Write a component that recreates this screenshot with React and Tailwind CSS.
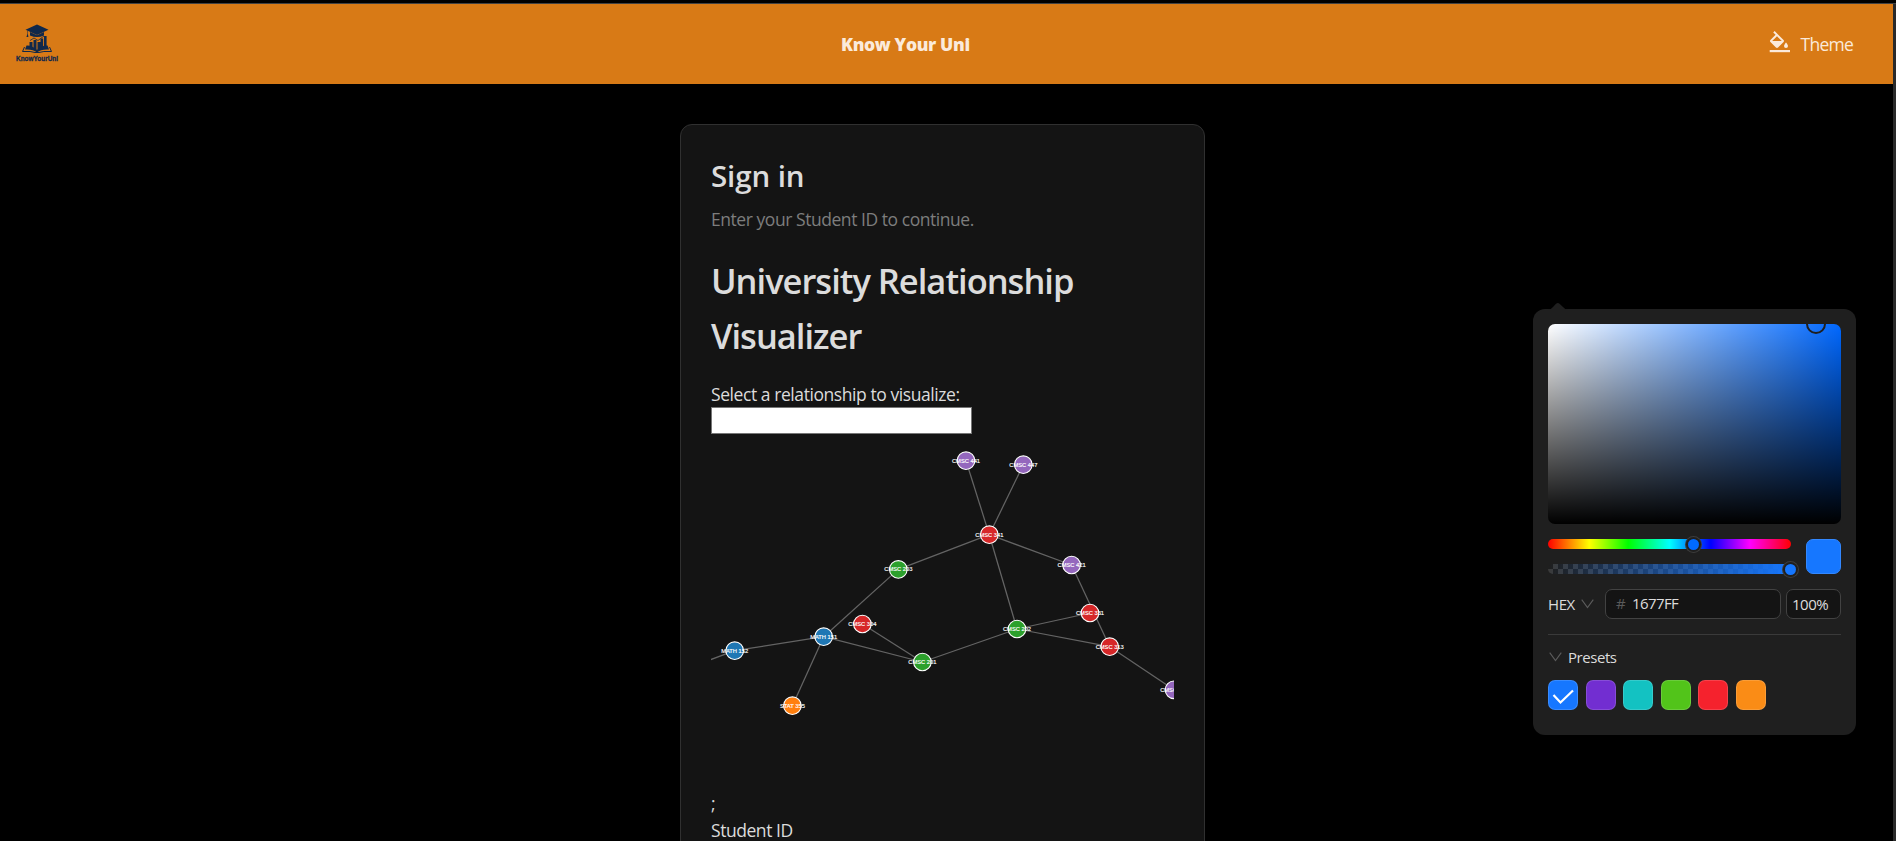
const BLUE = "#1f77b4", GREEN = "#2ca02c", RED = "#d62728", PURPLE = "#9467bd", ORANGE = "#ff7f0e";

const nodes = {
  m152: [734.7, 650.7, "MATH 152", BLUE],
  m151: [823.7, 636.7, "MATH 151", BLUE],
  s355: [792.4, 705.7, "STAT 355", ORANGE],
  c304: [862.4, 624, "CMSC 304", RED],
  c203: [898.3, 569.4, "CMSC 203", GREEN],
  c201: [922.4, 662, "CMSC 201", GREEN],
  c441: [966, 460.7, "CMSC 441", PURPLE],
  c447: [1023.3, 464.7, "CMSC 447", PURPLE],
  c341: [989.3, 534.7, "CMSC 341", RED],
  c421: [1071.6, 565, "CMSC 421", PURPLE],
  c202: [1017, 629, "CMSC 202", GREEN],
  c331: [1090, 613, "CMSC 331", RED],
  c313: [1109.7, 646.7, "CMSC 313", RED],
  c411: [1174, 689.8, "CMSC 411", PURPLE],
};

const links = [
  ["c441", "c341"], ["c447", "c341"], ["c341", "c203"], ["c341", "c421"], ["c341", "c202"],
  ["c203", "m151"], ["m151", "m152"], ["m151", "s355"], ["m151", "c201"], ["c304", "c201"],
  ["c201", "c202"], ["c202", "c331"], ["c202", "c313"], ["c421", "c313"], ["c313", "c411"],
];

function Graph() {
  return (
    <svg className="block h-[350px] w-[463px]" viewBox="711 434 463 350">
      <g stroke="#999" strokeOpacity="0.6" strokeWidth="1.25">
        {links.map(([a, b]) => (
          <line key={a + b} x1={nodes[a][0]} y1={nodes[a][1]} x2={nodes[b][0]} y2={nodes[b][1]} />
        ))}
        <line x1="734.7" y1="650.7" x2="700" y2="663.6" />
      </g>
      {Object.entries(nodes).map(([id, [x, y, label, fill]]) => (
        <g key={id}>
          <circle cx={x} cy={y} r="8.8" fill={fill} stroke="#fff" strokeWidth="1.1" />
          <text x={x} y={y + 2} textAnchor="middle" fill="#fff" stroke="#fff" strokeWidth="0.15" className="font-['Liberation_Sans'] text-[5.75px]">{label}</text>
        </g>
      ))}
    </svg>
  );
}

function Logo() {
  return (
    <svg className="h-[38px] w-[44px] overflow-visible" viewBox="0 0 44 38" fill="#10284a">
      <path d="M22-.5 10.500 4.800 22 10l11.500-5.200z" />
      <path d="M15 7v3.5q7 3 14 0V7l-7 3.2z" />
      <path d="M12.4 5.5v3.5l-1 3h2l-.5-3V5.5z" />
      <path d="M14.5 17h3v6l-3-1zM18.5 15h3v10l-3-1.5zM22.5 17h3v8h-3zM25.5 13.5h2.6v10l-2.6 1zM29 11h2.6v11l-2.6 1z" />
      <path d="m15 15.5 4-2.5 4 2.5 6-4.5" fill="none" stroke="#10284a" strokeWidth=".8" />
      <path d="M11.5 20.5Q17 20 22 25q5-5 10.500-4.500l1.500 4q-8-.5-12 3-4-3.500-12-3z" />
      <path d="m9.500 22-2 4.500q9-.5 12.500 1h4q3.500-1.500 12.500-1l-2-4.500" fill="none" stroke="#10284a" strokeWidth="1" />
      <text x="22" y="35.500" textAnchor="middle" textLength="42" lengthAdjust="spacingAndGlyphs" stroke="#10284a" strokeWidth="0.3" className="font-['Liberation_Sans'] text-[7.2px] font-bold">KnowYourUni</text>
    </svg>
  );
}

function PaintBucket() {
  return (
    <svg className="mt-[-3px] size-[24px]" viewBox="0 0 24 24" fill="currentColor">
      <path d="M16.560 8.940 7.620 0 6.210 1.410l2.380 2.380-5.150 5.150a1.490 1.490 0 0 0 0 2.120l5.500 5.500c.29.29.68.44 1.060.44s.77-.15 1.060-.44l5.500-5.500c.59-.58.59-1.530 0-2.120zM5.210 10 10 5.210 14.790 10zM19 11.500s-2 2.170-2 3.500a2 2 0 0 0 4 0c0-1.330-2-3.500-2-3.500z" />
      <path d="M2.700 19h20.300v2.200H2.700z" />
    </svg>
  );
}

function Chevron() {
  return (
    <svg className="h-[10px] w-[13px]" viewBox="0 0 13 10" fill="none" stroke="#5c5c5c" strokeWidth="1.1">
      <path d="m.7.7 5.800 7.800L12.300.7" />
    </svg>
  );
}

function Handle({ color }) {
  return (
    <span className="block size-[15px] rounded-full bg-[#1f1f1f] p-[2px] ring-1 ring-[#3d3d3d]">
      <span className={"block size-full rounded-full " + color} />
    </span>
  );
}

const presets = ["bg-[#1677ff]", "bg-[#722ed1]", "bg-[#13c2c2]", "bg-[#52c41a]", "bg-[#f5222d]", "bg-[#fa8c16]"];

function ColorPanel() {
  return (
    <div className="absolute left-[1533px] top-[309px] h-[426px] w-[323px] rounded-[12px] bg-[#1f1f1f] px-[15px] pt-[15px] text-[#dcdcdc]">
      <svg className="absolute left-[15px] top-[-6px] h-[7px] w-[20px]" viewBox="0 0 20 7" fill="#1f1f1f">
        <path d="M0 7q3-.6 5-3l3-3.200Q10-.8 11.500.8L15 4q2 2.400 5 3z" />
      </svg>
      <div className="relative h-[200px] overflow-hidden rounded-[7px] bg-[linear-gradient(0deg,#000,transparent),linear-gradient(90deg,#fff,rgba(255,255,255,0))] bg-[#0068ff]">
        <span className="absolute left-[258px] top-[-10px] size-[20px] rounded-full border-2 border-[#1f1f1f]" />
      </div>
      <div className="mt-[15px] flex justify-between">
        <div className="flex w-[243px] flex-col gap-[15px]">
          <div className="relative h-[10px] rounded-full bg-[linear-gradient(90deg,#f00,#ff0_17%,#0f0_33%,#0ff_50%,#00f_67%,#f0f_83%,#f00)]">
            <span className="absolute left-[138px] top-[-2px]"><Handle color="bg-[#006aff]" /></span>
          </div>
          <div className="relative h-[10px] rounded-full bg-[linear-gradient(90deg,rgba(22,119,255,0),#1677ff),repeating-conic-gradient(#3a3a3a_0_25%,transparent_0_50%)] bg-[size:auto,10px_10px]">
            <span className="absolute left-[235px] top-[-2px]"><Handle color="bg-[#1677ff]" /></span>
          </div>
        </div>
        <div className="size-[35px] rounded-[7px] border border-[#3388ff] bg-[#1677ff]" />
      </div>
      <div className="mt-[15px] flex h-[30px] items-center text-[15px]">
        <span className="w-[33px] tracking-[-0.4px]">HEX</span>
        <Chevron />
        <div className="ml-[11px] flex h-[30px] w-[176px] items-center rounded-[7px] border border-[#424242] bg-[#141414] pb-[2px] pl-[10px]">
          <span className="w-[16px] text-[#5a5a5a]">#</span>
          <span className="tracking-[-0.6px]">1677FF</span>
        </div>
        <div className="ml-[5px] flex h-[30px] w-[55px] items-center rounded-[7px] border border-[#424242] bg-[#141414] pl-[5px]">
          <span className="tracking-[-0.5px]">100%</span>
        </div>
      </div>
      <div className="mt-[15px] h-px bg-[#3a3a3a]" />
      <div className="mt-[11px] flex h-[22px] items-center gap-[6px] pl-px text-[15px]">
        <Chevron />
        <span className="tracking-[-0.45px]">Presets</span>
      </div>
      <div className="mt-[12px] flex gap-[7.5px]">
        {presets.map((color, i) => (
          <span key={color} className={"flex size-[30px] items-center justify-center rounded-[7px] border border-white/15 " + color}>
            {i === 0 && (
              <svg className="mt-[4px] h-[16px] w-[22px]" viewBox="0 0 22 16" fill="none" stroke="#fff" strokeWidth="2.200">
                <path d="m1.500 6 7 7.500L21 1.500" />
              </svg>
            )}
          </span>
        ))}
      </div>
    </div>
  );
}

export default function App() {
  return (
    <div className="relative flex h-[841px] w-full flex-col overflow-hidden bg-black font-['Open_Sans',sans-serif]">
      <div className="h-[4px] border-b border-[#424242] bg-black" />
      <div className="flex min-h-0 flex-1">
        <div className="flex w-[1893px] flex-col">
          <header className="flex h-[80px] shrink-0 items-center bg-[#d87a16] pr-[40px] pl-[15px] text-[#fbeadb]">
            <Logo />
            <h1 className="ml-[782px] flex-1 text-[17.5px] font-extrabold tracking-[-0.35px]">Know Your Uni</h1>
            <div className="flex items-center gap-[10px]">
              <PaintBucket />
              <span className="text-[17.5px] tracking-[-0.75px]">Theme</span>
            </div>
          </header>
          <main className="ml-[680px] mt-[40px] h-[900px] w-[525px] rounded-t-[12px] border border-[#303030] bg-[#141414] px-[30px] pt-[29px] text-[#dcdcdc]">
            <h2 className="h-[44px] text-[29.5px] font-semibold leading-[44px] tracking-[-0.1px]">Sign in</h2>
            <p className="mt-[7px] h-[28px] text-[17.5px] leading-[28px] tracking-[-0.45px] text-[#7d7d7d]">Enter your Student ID to continue.</p>
            <h2 className="mt-[20px] whitespace-nowrap text-[34.5px] font-semibold leading-[55px] tracking-[-1px]">University Relationship<br />Visualizer</h2>
            <p className="mt-[19px] h-[25px] text-[17.5px] leading-[24px] tracking-[-0.43px]">Select a relationship to visualize:</p>
            <div className="h-[27px] w-[261px] border border-[#767676] bg-white" />
            <Graph />
            <p className="mt-[6px] h-[27px] text-[17.5px] leading-[27px]">;</p>
            <p className="h-[27px] text-[17.5px] leading-[27px] tracking-[-0.45px]">Student ID</p>
          </main>
        </div>
        <div className="flex-1 bg-[#2a2a2a]" />
      </div>
      <ColorPanel />
    </div>
  );
}
